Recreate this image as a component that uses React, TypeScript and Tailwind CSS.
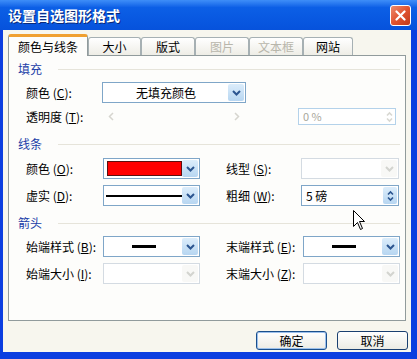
import React from "react";

const FONT = "font-['Noto_Sans_CJK_SC','Noto_Sans',sans-serif]";

const Chevron = ({ color }: { color: string }) => (
  <svg width="9" height="6" viewBox="0 0 9 6">
    <path d="M1 1 L4.5 4.5 L8 1" fill="none" stroke={color} strokeWidth="2" />
  </svg>
);

const SpinArrows = ({ color }: { color: string }) => (
  <svg width="7" height="12" viewBox="0 0 7 12">
    <path d="M1 4.5 L3.5 2 L6 4.5" fill="none" stroke={color} strokeWidth="1.6" />
    <path d="M1 7.5 L3.5 10 L6 7.5" fill="none" stroke={color} strokeWidth="1.6" />
  </svg>
);

function Combo({
  className,
  disabled,
  children,
}: {
  className: string;
  disabled?: boolean;
  children?: React.ReactNode;
}) {
  return (
    <div
      className={
        (disabled
          ? "flex h-[21px] border border-[#d4dbe2] bg-white p-px "
          : "flex h-[21px] border border-[#7fa6c8] bg-white p-px ") + className
      }
    >
      <div className="flex min-w-0 flex-1 items-center">{children}</div>
      <div
        className={
          disabled
            ? "flex w-[16px] items-center justify-center rounded-[2px] bg-[#f8f8f6]"
            : "flex w-[16px] items-center justify-center rounded-[2px] bg-gradient-to-b from-[#dcedfb] to-[#b7d6f1]"
        }
      >
        <Chevron color={disabled ? "#d3d4cf" : "#2b5590"} />
      </div>
    </div>
  );
}

function Header({ text }: { text: string }) {
  return (
    <div className="ml-[9px] mr-[5px] flex h-[14px] items-center">
      <span className="text-[12px] leading-none text-[#1b3ea8]">{text}</span>
      <div className="ml-[16px] h-px flex-1 bg-[#e6e4da]" />
    </div>
  );
}

function Label({ children, className }: { children: React.ReactNode; className: string }) {
  return (
    <span className={"shrink-0 whitespace-nowrap text-[12px] leading-none text-black " + className}>
      {children}
    </span>
  );
}

function Tab({
  text,
  className,
  active,
  disabled,
}: {
  text: string;
  className: string;
  active?: boolean;
  disabled?: boolean;
}) {
  if (active) {
    return (
      <div
        className={
          "relative z-10 -mb-px flex h-[22px] items-center justify-center rounded-t-[3px] border-x border-t-[3px] border-x-[#919b9c] border-t-[#f0a030] bg-[#fdfdfb] text-[12px] text-black " +
          className
        }
      >
        {text}
      </div>
    );
  }
  return (
    <div
      className={
        "flex h-[18px] items-center justify-center rounded-t-[3px] border-x border-t border-[#a6b0b3] bg-gradient-to-b from-white to-[#eeede6] text-[12px] " +
        (disabled ? "text-[#b8b6ab] " : "text-black ") +
        className
      }
    >
      {text}
    </div>
  );
}

export default function App() {
  return (
    <div className={"relative flex h-[359px] w-[417px] flex-col bg-[#0b3ee0] " + FONT}>
      {/* Title bar */}
      <div className="flex h-[30px] shrink-0 items-center justify-between bg-gradient-to-b from-[#3e8ef8] via-[#0c5fe6] via-25% to-[#0652dc] pl-[8px] pr-[6px]">
        <span className="text-[14px] font-bold leading-none text-white [text-shadow:1px_1px_0_#0a2a7a]">
          设置自选图形格式
        </span>
        <div className="flex h-[21px] w-[21px] items-center justify-center rounded-[3px] border border-white bg-gradient-to-br from-[#ec8a6c] via-[#e0532f] to-[#c23a1a]">
          <svg width="11" height="11" viewBox="0 0 11 11">
            <path d="M1.5 1.5 L9.5 9.5 M9.5 1.5 L1.5 9.5" stroke="white" strokeWidth="2.2" strokeLinecap="round" />
          </svg>
        </div>
      </div>

      {/* Body */}
      <div className="mb-[7px] ml-[3px] mr-[6px] flex flex-1 flex-col bg-[#f7f6ee]">
        {/* Tabs */}
        <div className="ml-[5px] mt-[4px] flex items-end">
          <Tab text="颜色与线条" className="w-[80px]" active />
          <Tab text="大小" className="w-[53px]" />
          <Tab text="版式" className="w-[54px]" />
          <Tab text="图片" className="w-[54px]" disabled />
          <Tab text="文本框" className="w-[54px]" disabled />
          <Tab text="网站" className="w-[50px]" />
        </div>

        {/* Panel */}
        <div className="mx-[5px] flex h-[266px] flex-col border border-[#919b9c] bg-[#fdfdfb] pt-[6px]">
          <Header text="填充" />
          <div className="mt-[6px] flex items-center pl-[17px]">
            <Label className="w-[76px]">
              颜色 (<u>C</u>):
            </Label>
            <Combo className="w-[144px]">
              <span className="flex-1 text-center text-[12px] text-black">无填充颜色</span>
            </Combo>
          </div>
          <div className="mt-[5px] flex h-[17px] items-center pl-[17px]">
            <Label className="w-[79px]">
              透明度 (<u>T</u>):
            </Label>
            <div className="flex h-[12px] w-[12px] items-center justify-center">
              <svg width="6" height="9" viewBox="0 0 6 9">
                <path d="M5 1 L1.5 4.5 L5 8" fill="none" stroke="#d6d5cf" strokeWidth="1.5" />
              </svg>
            </div>
            <div className="w-[114px]" />
            <div className="flex h-[12px] w-[12px] items-center justify-center">
              <svg width="6" height="9" viewBox="0 0 6 9">
                <path d="M1 1 L4.5 4.5 L1 8" fill="none" stroke="#d6d5cf" strokeWidth="1.5" />
              </svg>
            </div>
            <div className="ml-[55px] flex h-[17px] w-[98px] items-center border border-[#b4d2ea] bg-white pl-[4px] pr-[2px]">
              <span className="flex-1 text-[11px] leading-none text-[#a9a79c]">0 %</span>
              <SpinArrows color="#d8d8d2" />
            </div>
          </div>

          <div className="mt-[12px]">
            <Header text="线条" />
          </div>
          <div className="mt-[7px] flex items-center pl-[17px]">
            <Label className="w-[77px]">
              颜色 (<u>O</u>):
            </Label>
            <Combo className="w-[97px]">
              <div className="ml-[2px] h-[15px] w-[76px] border border-[#5a1010] bg-[#ff0000]" />
            </Combo>
            <Label className="ml-[26px] w-[75px]">
              线型 (<u>S</u>):
            </Label>
            <Combo className="w-[98px]" disabled />
          </div>
          <div className="mt-[6px] flex items-center pl-[17px]">
            <Label className="w-[77px]">
              虚实 (<u>D</u>):
            </Label>
            <Combo className="w-[97px]">
              <div className="ml-[1px] h-[2px] w-[78px] bg-black" />
            </Combo>
            <Label className="ml-[26px] w-[75px]">
              粗细 (<u>W</u>):
            </Label>
            <div className="flex h-[21px] w-[98px] items-center border border-[#7fa6c8] bg-white p-px">
              <span className="ml-[3px] flex-1 text-[12px] leading-none text-black">5 磅</span>
              <div className="flex h-full w-[14px] items-center justify-center rounded-[2px] bg-gradient-to-b from-[#dcedfb] to-[#b7d6f1]">
                <SpinArrows color="#2b5590" />
              </div>
            </div>
          </div>

          <div className="mt-[10px]">
            <Header text="箭头" />
          </div>
          <div className="mt-[6px] flex items-center pl-[17px]">
            <Label className="w-[77px]">
              始端样式 (<u>B</u>):
            </Label>
            <Combo className="w-[97px]">
              <div className="flex flex-1 justify-center">
                <div className="h-[3px] w-[24px] bg-black" />
              </div>
            </Combo>
            <Label className="ml-[26px] w-[77px]">
              末端样式 (<u>E</u>):
            </Label>
            <Combo className="w-[97px]">
              <div className="flex flex-1 justify-center">
                <div className="h-[3px] w-[24px] bg-black" />
              </div>
            </Combo>
          </div>
          <div className="mt-[6px] flex items-center pl-[17px]">
            <Label className="w-[77px]">
              始端大小 (<u>I</u>):
            </Label>
            <Combo className="w-[97px]" disabled />
            <Label className="ml-[26px] w-[77px]">
              末端大小 (<u>Z</u>):
            </Label>
            <Combo className="w-[97px]" disabled />
          </div>
        </div>

        {/* Buttons */}
        <div className="mt-[10px] flex justify-end gap-[10px] pr-[3px]">
          <div className="flex h-[19px] w-[71px] items-center justify-center rounded-[3px] border border-[#1a4f8c] bg-gradient-to-b from-white to-[#ecebe4] text-[12px] leading-none text-black shadow-[inset_0_0_0_1px_#9cc0ec]">
            确定
          </div>
          <div className="flex h-[19px] w-[71px] items-center justify-center rounded-[3px] border border-[#1a3f70] bg-gradient-to-b from-white to-[#ecebe4] text-[12px] leading-none text-black">
            取消
          </div>
        </div>
      </div>

      {/* Mouse cursor */}
      <svg className="absolute left-[353px] top-[210px]" width="13" height="21" viewBox="0 0 13 21">
        <path
          d="M0.5 0.5 L0.5 16.5 L4.5 12.5 L7.5 19.5 L9.5 18.5 L6.5 11.5 L11.5 11.5 Z"
          fill="white"
          stroke="black"
          strokeWidth="1"
          strokeLinejoin="round"
        />
      </svg>
    </div>
  );
}
